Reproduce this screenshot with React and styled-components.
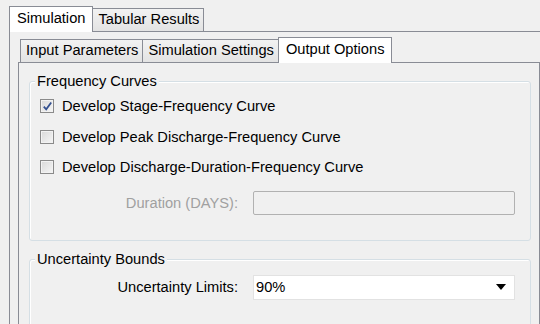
import React from 'react'
import styled, { createGlobalStyle } from 'styled-components'

const GlobalStyle = createGlobalStyle`
  html, body {
    margin: 0;
    padding: 0;
    background: #f0f0f0;
    overflow: hidden;
  }
  body {
    font-family: "Liberation Sans", Arial, sans-serif;
    font-size: 14.67px;
    color: #000;
  }
`

function App() {
  return (
    <Window>
      <GlobalStyle />
      <TabStrip $top={6} $left={9}>
        <Tab $selected>Simulation</Tab>
        <Tab>Tabular Results</Tab>
      </TabStrip>

      <OuterPanel>
        <TabStrip $top={5} $left={2}>
          <Tab>Input Parameters</Tab>
          <Tab>Simulation Settings</Tab>
          <Tab $selected>Output Options</Tab>
        </TabStrip>

        <InnerPanel>
          <Group $mt={18}>
            <GroupTitle>Frequency Curves</GroupTitle>
            <CheckRows>
              <CheckRow>
                <CheckBox $checked>
                  <svg width="11" height="11" viewBox="0 0 11 11">
                    <path d="M1.8 5.6 L4.2 8.3 L9.2 1.5" fill="none" stroke="#33508f" strokeWidth="1.8" />
                  </svg>
                </CheckBox>
                Develop Stage-Frequency Curve
              </CheckRow>
              <CheckRow>
                <CheckBox />
                Develop Peak Discharge-Frequency Curve
              </CheckRow>
              <CheckRow>
                <CheckBox />
                Develop Discharge-Duration-Frequency Curve
              </CheckRow>
            </CheckRows>
            <Field $mt={8} $pb={25}>
              <FieldLabel $disabled>Duration (DAYS):</FieldLabel>
              <TextBox disabled />
            </Field>
          </Group>

          <Group $mt={18}>
            <GroupTitle>Uncertainty Bounds</GroupTitle>
            <Field $mt={7} $pb={30}>
              <FieldLabel>Uncertainty Limits:</FieldLabel>
              <Select>
                <span>90%</span>
                <svg width="10" height="6" viewBox="0 0 10 6">
                  <polygon points="0,0 10,0 5,6" fill="#000" />
                </svg>
              </Select>
            </Field>
          </Group>
        </InnerPanel>
      </OuterPanel>
    </Window>
  )
}

export default App

const Window = styled.div`
  width: 540px;
  height: 324px;
  overflow: hidden;
`

const TabStrip = styled.div`
  display: flex;
  align-items: flex-end;
  padding: ${p => p.$top}px 0 0 ${p => p.$left}px;
  position: relative;
  z-index: 1;
`

const Tab = styled.div`
  box-sizing: border-box;
  height: ${p => (p.$selected ? 26 : 23)}px;
  margin-bottom: ${p => (p.$selected ? -1 : 0)}px;
  padding: ${p => (p.$selected ? '3px 7px 0 7px' : '2px 4px 0 5px')};
  border: 1px solid #898c95;
  border-bottom: none;
  background: ${p => (p.$selected ? '#fff' : 'linear-gradient(#f2f2f2, #e3e3e3)')};
  white-space: nowrap;
  line-height: 17px;
  & + & {
    margin-left: -1px;
  }
`

const OuterPanel = styled.div`
  margin-left: 9px;
  width: 560px;
  height: 320px;
  border: 1px solid #898c95;
  padding-left: 8px;
`

const InnerPanel = styled.div`
  width: 522px;
  box-sizing: border-box;
  height: 300px;
  border: 1px solid #898c95;
  padding: 0 8px 0 10px;
`

const Group = styled.div`
  margin-top: ${p => p.$mt}px;
  border: 1px solid #d5dfe5;
  border-radius: 3px;
  box-shadow: inset 1px 1px 0 #fff;
`

const GroupTitle = styled.div`
  width: fit-content;
  margin: -9px 0 0 5px;
  padding: 0 2px;
  line-height: 17px;
  background: #f0f0f0;
`

const CheckRows = styled.div`
  display: flex;
  flex-direction: column;
  padding: 1px 0 0 10px;
`

const CheckRow = styled.div`
  display: flex;
  align-items: center;
  gap: 8px;
  height: 30.5px;
  white-space: nowrap;
`

const CheckBox = styled.span`
  box-sizing: border-box;
  width: 14px;
  height: 14px;
  border: 1px solid #8a8a8a;
  background: linear-gradient(135deg, #d8d8d8, #f6f6f6);
  box-shadow: inset 0 0 0 1px #f2f2f2;
  display: flex;
  align-items: center;
  justify-content: center;
  svg {
    display: block;
  }
`

const Field = styled.div`
  display: flex;
  align-items: center;
  justify-content: flex-end;
  margin-top: ${p => p.$mt}px;
  padding: 0 15px ${p => p.$pb}px 0;
`

const FieldLabel = styled.span`
  margin-right: 15px;
  color: ${p => (p.$disabled ? '#a0a0a0' : '#000')};
  white-space: nowrap;
`

const TextBox = styled.input`
  box-sizing: border-box;
  width: 262px;
  height: 24px;
  margin: 0;
  border: 1px solid #b1b1b1;
  border-radius: 2px;
  background: #f0f0f0;
  outline: none;
`

const Select = styled.div`
  box-sizing: border-box;
  width: 262px;
  height: 25px;
  border: 1px solid #e2e2e2;
  background: #fff;
  display: flex;
  align-items: center;
  justify-content: space-between;
  padding: 0 8px 0 2px;
`
